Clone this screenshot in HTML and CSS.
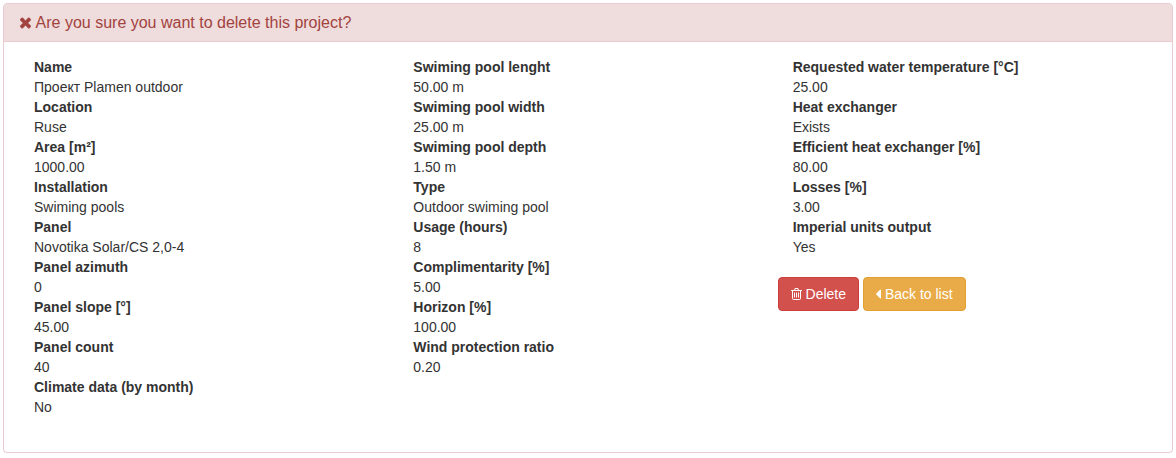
FILE: index.html
```html
<!DOCTYPE html>
<html lang="en">
<head>
<meta charset="utf-8">
<title>Delete project</title>
<link rel="stylesheet" href="styles.css">
</head>
<body>
<main class="panel">
  <header class="panel-heading">
    <h1 class="panel-title"><svg class="icon-times" viewBox="0 0 13 12" aria-hidden="true"><path d="M3.900.8 6.500 3.400 9.100.8Q9.800.2 10.500.8L11.700 2Q12.300 2.700 11.700 3.400L9.100 6 11.700 8.600Q12.300 9.300 11.700 10L10.500 11.200Q9.800 11.800 9.100 11.200L6.500 8.600 3.900 11.200Q3.200 11.800 2.500 11.200L1.300 10Q.7 9.300 1.300 8.600L3.900 6 1.300 3.400Q.7 2.700 1.300 2L2.500.8Q3.200.2 3.900.8Z"/></svg> Are you sure you want to delete this project?</h1>
  </header>
  <div class="panel-body">
    <dl class="details">
      <dt>Name</dt><dd>Проект Plamen outdoor</dd>
      <dt>Location</dt><dd>Ruse</dd>
      <dt>Area [m²]</dt><dd>1000.00</dd>
      <dt>Installation</dt><dd>Swiming pools</dd>
      <dt>Panel</dt><dd>Novotika Solar/CS 2,0-4</dd>
      <dt>Panel azimuth</dt><dd>0</dd>
      <dt>Panel slope [°]</dt><dd>45.00</dd>
      <dt>Panel count</dt><dd>40</dd>
      <dt>Climate data (by month)</dt><dd>No</dd>
    </dl>
    <dl class="details">
      <dt>Swiming pool lenght</dt><dd>50.00 m</dd>
      <dt>Swiming pool width</dt><dd>25.00 m</dd>
      <dt>Swiming pool depth</dt><dd>1.50 m</dd>
      <dt>Type</dt><dd>Outdoor swiming pool</dd>
      <dt>Usage (hours)</dt><dd>8</dd>
      <dt>Complimentarity [%]</dt><dd>5.00</dd>
      <dt>Horizon [%]</dt><dd>100.00</dd>
      <dt>Wind protection ratio</dt><dd>0.20</dd>
    </dl>
    <div class="column">
      <dl class="details">
        <dt>Requested water temperature [°C]</dt><dd>25.00</dd>
        <dt>Heat exchanger</dt><dd>Exists</dd>
        <dt>Efficient heat exchanger [%]</dt><dd>80.00</dd>
        <dt>Losses [%]</dt><dd>3.00</dd>
        <dt>Imperial units output</dt><dd>Yes</dd>
      </dl>
      <form class="actions">
        <button type="button" class="btn btn-danger"><svg class="icon-trash" viewBox="0 0 11 12" aria-hidden="true"><path fill="none" stroke="currentColor" d="M0 2.500h11M3.500 2.500 4 .5h3l.5 2M1.500 2.500v8q0 1 1 1h6q1 0 1-1v-8M3.500 4.500v5M5.500 4.500v5M7.500 4.500v5"/></svg> Delete</button>
        <a href="#" class="btn btn-warning"><svg class="icon-caret" viewBox="0 0 5 10" aria-hidden="true"><path d="M5 1v8q-.3.800-1 .3L.3 5.500Q0 5 .3 4.500L4 .7Q4.700.2 5 1Z"/></svg> Back to list</a>
      </form>
    </div>
  </div>
</main>
</body>
</html>
```
FILE: styles.css
```css
* { box-sizing: border-box; }

body {
  margin: 3px;
  background: #fff;
  color: #333;
  font: 14px/20px "Liberation Sans", Arial, sans-serif;
}

.panel {
  border: 1px solid #e8cad0;
  border-radius: 4px;
  box-shadow: 0 1px 1px rgba(0, 0, 0, 0.05);
}

.panel-heading {
  padding: 10px 15px;
  border-bottom: 1px solid #e8cad0;
  border-radius: 3px 3px 0 0;
  background: #efdcdc;
  color: #a24340;
}

.panel-title {
  margin: 0;
  font-size: 16px;
  font-weight: 400;
  line-height: 17px;
}

.panel-body {
  display: grid;
  grid-template-columns: repeat(3, 1fr);
  padding: 15px 15px 35px;
}

.details {
  margin: 0;
  padding: 0 15px;
}

.details dt { font-weight: 700; }
.details dd { margin: 0; }

.actions {
  display: flex;
  gap: 4px;
  margin-top: 20px;
}

.btn {
  padding: 6px 12px;
  border: 1px solid;
  border-radius: 4px;
  color: #fff;
  font: inherit;
  text-decoration: none;
  white-space: nowrap;
  cursor: pointer;
}

.btn-danger { background: #d2514d; border-color: #cb3f3b; }
.btn-warning { background: #e9ab47; border-color: #e49f32; }

.icon-times { width: 13px; height: 12px; fill: currentColor; vertical-align: -1px; }
.icon-trash { width: 11px; height: 12px; vertical-align: -1px; }
.icon-caret { width: 5px; height: 10px; fill: currentColor; vertical-align: 0; }
```
